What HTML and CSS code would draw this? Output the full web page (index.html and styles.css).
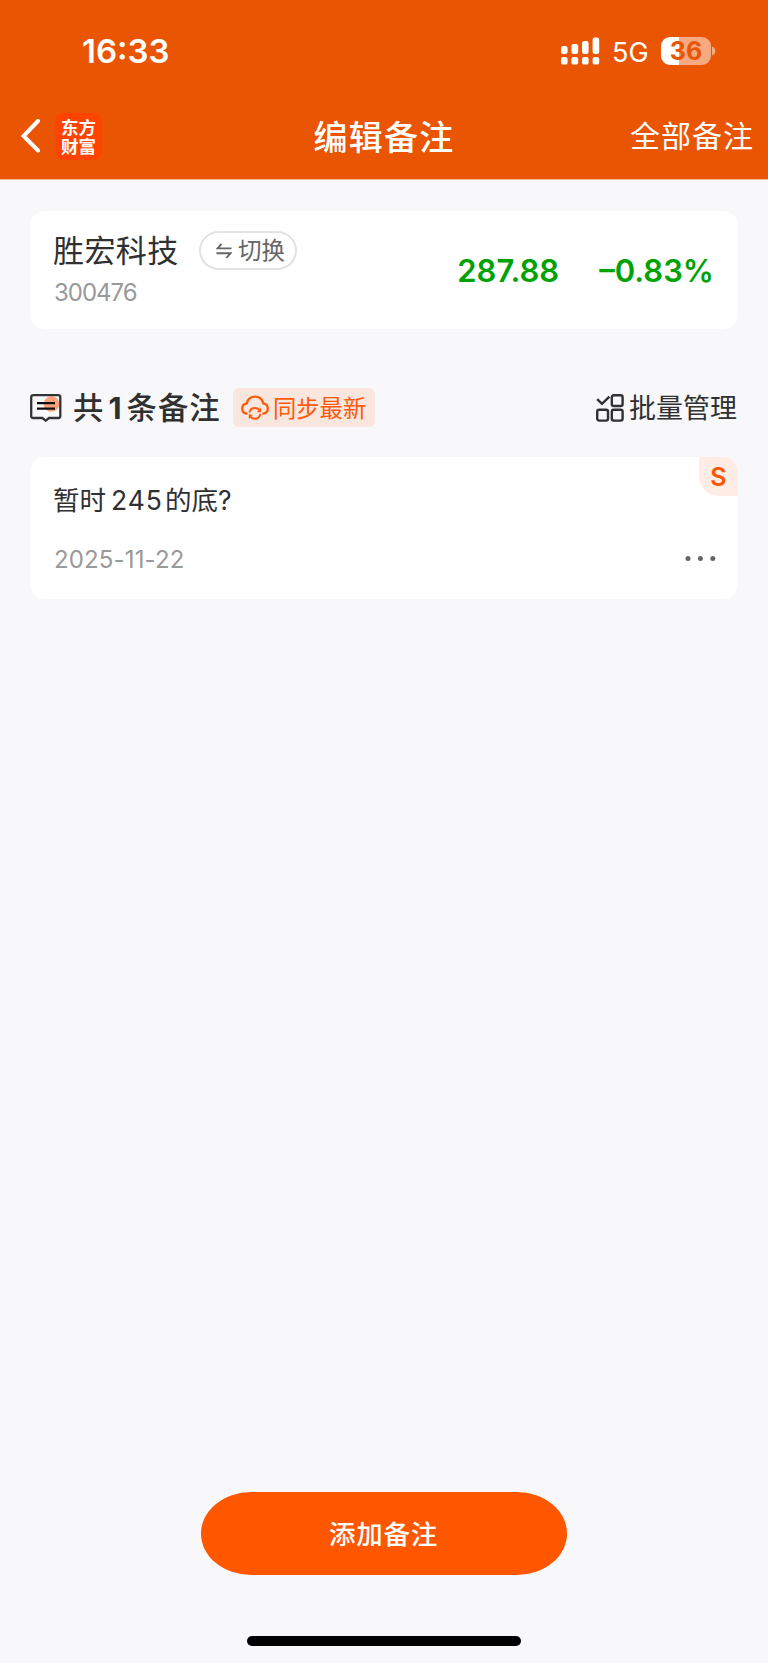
FILE: index.html
```html
<!DOCTYPE html>
<html lang="zh-CN">
<head>
<meta charset="utf-8">
<title>编辑备注</title>
<link rel="stylesheet" href="styles.css">
</head>
<body>
<div class="screen">
  <header class="header">
    <div class="status">
      <span class="time">16:33</span>
      <div class="status-right">
        <svg class="signal" width="39" height="28" viewBox="0 0 39 28" fill="#fff">
          <rect x="0" y="9" width="6.6" height="8" rx="2.2"/><rect x="10.4" y="7" width="6.8" height="10" rx="2.2"/><rect x="21" y="4" width="6.6" height="13" rx="2.2"/><rect x="31.6" y="0.5" width="6.6" height="16.5" rx="2.2"/>
          <rect x="0" y="20" width="6.6" height="7.6" rx="2.2"/><rect x="10.4" y="20" width="6.8" height="7.6" rx="2.2"/><rect x="21" y="20" width="6.6" height="7.6" rx="2.2"/><rect x="31.6" y="20" width="6.6" height="7.6" rx="2.2"/>
        </svg>
        <span class="net">5G</span>
        <span class="battery"><span class="level">36</span></span>
        <svg class="nub" width="4" height="10" viewBox="0 0 4 10"><path d="M0 0.5C4.4 2 4.4 8 0 9.5Z" fill="#f5aa82"/></svg>
      </div>
    </div>
    <nav class="nav">
      <div class="nav-left">
        <svg width="20" height="34" viewBox="0 0 20 34" fill="none" stroke="#fff" stroke-width="4" stroke-linecap="round" stroke-linejoin="miter"><path d="M18 2L3.6 17L18 31.5"/></svg>
        <div class="logo">东方<br>财富</div>
      </div>
      <h1 class="title">编辑备注</h1>
      <span class="all">全部备注</span>
    </nav>
  </header>

  <main class="main">
    <section class="card stock">
      <div class="stock-info">
        <div class="stock-row">
          <span class="stock-name">胜宏科技</span>
          <span class="switch">
            <svg width="16" height="16" viewBox="0 0 16 16" fill="none" stroke="#666" stroke-width="1.9"><path d="M5.5 0.8L1.6 5.4H15.5M0.5 10.3H14.4L10.4 15"/></svg>
            <span>切换</span>
          </span>
        </div>
        <span class="code">300476</span>
      </div>
      <span class="price">287.88</span>
      <span class="change">–0.83%</span>
    </section>

    <div class="bar">
      <svg class="note-icon" width="32" height="28" viewBox="0 0 32 28" fill="none">
        <circle cx="21.5" cy="10" r="7.8" fill="#ffa37a"/>
        <path d="M3.5 1.2H28.3Q30.3 1.2 30.3 3.2V22Q30.3 24 28.3 24H19L15.7 26.6L12.4 24H3.2Q1.2 24 1.2 22V3.2Q1.2 1.2 3.5 1.2Z" stroke="#333" stroke-width="2.3"/>
        <path d="M7 9.2H25M7 14.6H25" stroke="#111" stroke-width="2.2"/>
      </svg>
      <h2 class="count">共<b>1</b>条备注</h2>
      <span class="sync">
        <svg width="28" height="26" viewBox="0 0 28 26" fill="none" stroke="#ff5a0a" stroke-width="2.3" stroke-linecap="round">
          <path d="M5.4 18.7C2.8 18 1.2 15.9 1.2 13.4C1.2 10.6 3.2 8.8 5.8 8.3C6.7 4.3 9.6 1.7 14 1.7C18.4 1.7 21.3 4.3 22.2 8.3C24.8 8.8 26.8 10.6 26.8 13.4C26.8 15.9 25.2 18 22.4 18.7"/>
          <path d="M8.7 16.6C9.5 14.2 11.5 13 13.8 13C16.1 13 18 14.1 18.7 16M19.2 19.8C18.4 22.2 16.5 23.8 14 23.8C11.7 23.8 9.8 22.6 8.9 20.6" stroke-width="2"/>
          <path d="M19.4 13.8V16.6H17M8.4 23V20.2H10.8" stroke-width="1.2"/>
        </svg>
        <span>同步最新</span>
      </span>
      <span class="batch">
        <svg width="28" height="28" viewBox="0 0 28 28" fill="none" stroke="#303133" stroke-width="2.4">
          <path d="M1.2 5.2L6 9.8L13.4 2.6"/><rect x="15.8" y="1.2" width="10.8" height="10.8" rx="2"/><rect x="1.2" y="15.8" width="10.8" height="10.8" rx="2"/><rect x="15.8" y="15.8" width="10.8" height="10.8" rx="2"/>
        </svg>
        <span>批量管理</span>
      </span>
    </div>

    <section class="card note">
      <span class="badge">S</span>
      <p class="note-text">暂时<span class="num">245</span>的底<span class="q">?</span></p>
      <div class="note-foot">
        <span class="date">2025-11-22</span>
        <svg width="32" height="6" viewBox="0 0 32 6" fill="#666"><circle cx="3" cy="2.6" r="2.5"/><circle cx="15.4" cy="2.6" r="2.5"/><circle cx="27.8" cy="2.6" r="2.5"/></svg>
      </div>
    </section>
  </main>

  <footer class="footer">
    <button class="add">添加备注</button>
    <div class="home"></div>
  </footer>
</div>
</body>
</html>
```

FILE: styles.css
```css
* { box-sizing: border-box; }
body { margin: 0; font-family: Inter, "Noto Sans CJK SC", sans-serif; }
h1, h2, p { margin: 0; }
svg { display: block; flex: none; }
span, h1, h2, p { white-space: nowrap; }
.screen { width: 768px; height: 1663px; background: #f8f8fb; display: flex; flex-direction: column; }

.header { height: 180px; background: #ea5504; color: #fff; border-bottom: 1px solid #f6b893; }
.status { height: 100px; padding: 2px 52px 0 82px; display: flex; align-items: center; justify-content: space-between; }
.time { font-size: 33px; font-weight: 600; }
.status-right { display: flex; align-items: center; }
.net { font-size: 27px; margin-left: 12px; padding-top: 2px; width: 49px; font-weight: 400; }
.battery { width: 50px; height: 28px; border-radius: 9px; background: linear-gradient(90deg, #fff 0 18px, #f5aa82 18px); display: flex; align-items: center; justify-content: center; }
.level { color: #ea5504; font-size: 25px; font-weight: 700; }
.nub { margin-left: 1px; }
.nav { height: 72px; padding: 0 14px 0 20px; display: grid; grid-template-columns: 1fr auto 1fr; align-items: center; }
.nav-left { display: flex; align-items: center; gap: 15px; }
.logo { width: 47px; height: 47px; border-radius: 9px; background: #ff4300; text-align: center; font-family: "Noto Sans CJK SC", sans-serif; font-size: 17.5px; line-height: 19px; font-weight: 700; padding-top: 4px; }
.title { font-size: 34px; font-weight: 500; letter-spacing: 1.2px; padding: 0 6px 2px 0; }
.all { justify-self: end; font-size: 30px; font-weight: 400; letter-spacing: 1px; padding-bottom: 4px; }

.main { padding: 31px 30px 0; flex: 1; }
.card { background: #fff; border-radius: 15px; }
.stock { height: 118px; padding: 20px 24px 0 23px; display: flex; }
.stock-info { flex: 1; }
.stock-row { display: flex; align-items: center; height: 39px; }
.stock-name { width: 146px; font-size: 31px; line-height: 39px; font-weight: 400; letter-spacing: 0.4px; color: #303030; }
.switch { width: 98px; height: 39px; border: 2px solid #e3e3e3; border-radius: 20px; display: flex; align-items: center; padding-left: 15px; gap: 6px; font-size: 23.5px; line-height: 30px; font-weight: 400; color: #666; }
.code { display: block; margin: 8px 0 0 1px; font-size: 24px; line-height: 29px; color: #999; letter-spacing: -1px; }
.price, .change { font-size: 31px; line-height: 79px; font-weight: 600; color: #00a303; }
.change { margin-left: 40px; }

.bar { height: 39px; margin-top: 59px; display: flex; align-items: center; }
.count { margin-left: 11px; width: 160px; padding-top: 2px; font-size: 30.4px; line-height: 39px; font-weight: 500; letter-spacing: 1px; color: #303030; }
.count b { font-weight: 700; margin: 0 4px 0 4px; }
.sync { width: 142px; height: 39px; border-radius: 6px; background: #f9e6df; color: #ff5a0a; display: flex; align-items: center; padding-left: 8px; gap: 4px; font-size: 23.3px; line-height: 30px; font-weight: 400; }
.sync span, .batch span { padding-top: 2px; }
.batch { margin-left: auto; margin-right: 1px; display: flex; align-items: center; gap: 5px; font-size: 27px; line-height: 36px; color: #303030; font-weight: 400; }

.note { position: relative; height: 142px; margin-top: 30px; padding: 23px 21px 0 23px; }
.badge { position: absolute; top: 0; right: 0; width: 39px; height: 39px; border-radius: 0 15px 0 20px; background: #ffece4; color: #ff5600; font-size: 25px; line-height: 41px; font-weight: 600; text-align: center; }
.note-text { font-size: 26.5px; line-height: 40px; color: #303030; }
.num { margin: 0 2px 0 5px; letter-spacing: 1px; }
.note-foot { margin-top: 23px; display: flex; align-items: center; justify-content: space-between; height: 32px; }
.date { font-size: 24px; color: #999; letter-spacing: 0.15px; padding: 1px 0 0 1px; }

.footer { height: 171px; display: flex; flex-direction: column; align-items: center; }
.add { width: 366px; height: 83px; padding: 0 1px 0 0; border: 0; border-radius: 50px / 41.5px; background: #ff5600; color: #fff; font: 500 26.5px/40px Inter, "Noto Sans CJK SC", sans-serif; letter-spacing: 0.8px; }
.home { width: 274px; height: 10px; margin-top: 61px; border-radius: 5px; background: #000; }
```
